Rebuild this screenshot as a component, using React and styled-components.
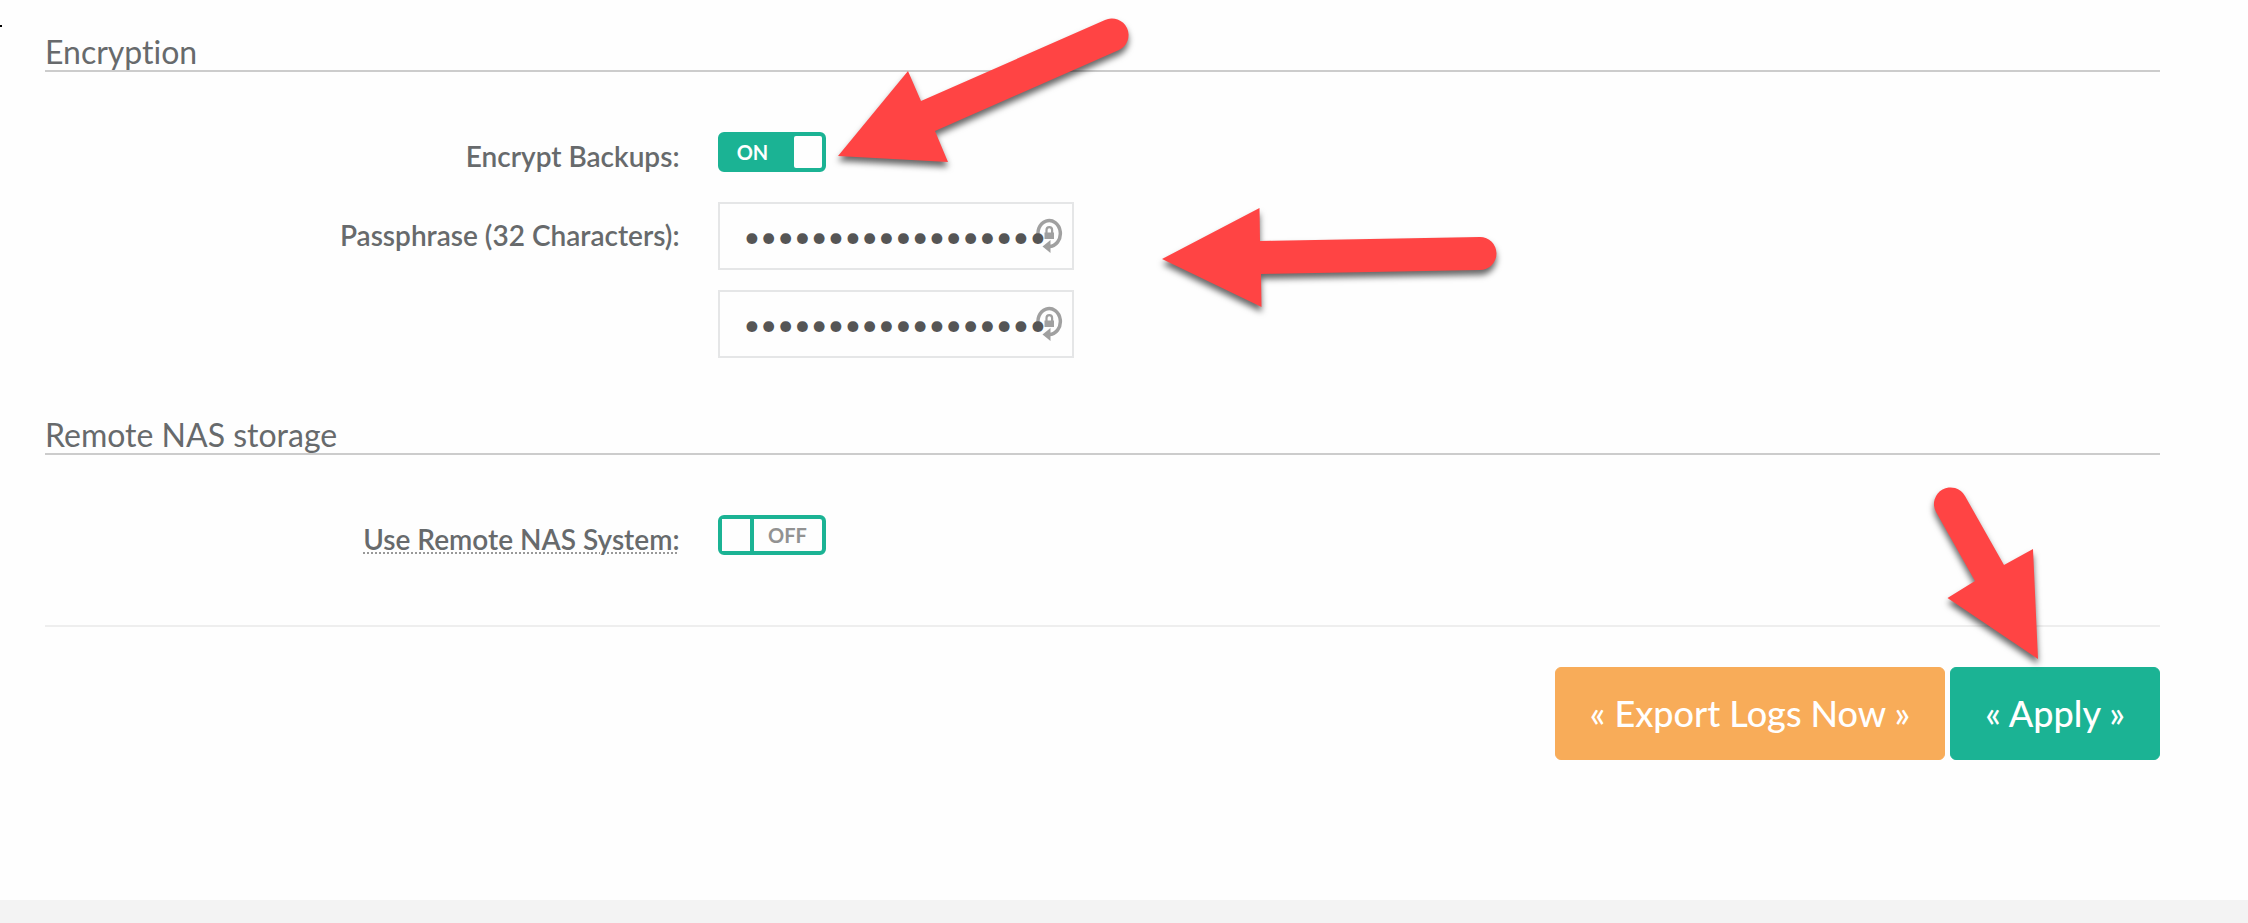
import { useState } from "react";
import styled, { createGlobalStyle } from "styled-components";

const colors = {
  green: "#1bb394",
  orange: "#f8ac59",
  text: "#676a6c",
  red: "#ff4444",
  icon: "#a0a0a0",
};

const App = () => {
  const [encrypt, setEncrypt] = useState(true);
  const [remoteNas, setRemoteNas] = useState(false);
  const [passphrase, setPassphrase] = useState("0123456789abcdef0123456789abcdef");
  const [confirm, setConfirm] = useState("0123456789abcdef0123456789abcdef");

  return (
    <>
      <GlobalStyle />
      <StyledPage>
        <StyledSpeck />
        <StyledForm onSubmit={(e) => e.preventDefault()}>
          <StyledSection>
            <StyledHeading>Encryption</StyledHeading>
            <StyledRow>
              <StyledLabel htmlFor="encrypt">Encrypt Backups:</StyledLabel>
              <StyledAnchor>
                <Switch id="encrypt" checked={encrypt} onChange={setEncrypt} />
                <Arrow
                  left={110}
                  top={-132}
                  width={310}
                  height={180}
                  d="M10 156L80 71L93 101L277 20A16.500 16.500 0 0 1 291 50L107 131L120 162Z"
                />
              </StyledAnchor>
            </StyledRow>
            <StyledRow>
              <StyledLabel htmlFor="passphrase" $tall>
                Passphrase (32 Characters):
              </StyledLabel>
              <StyledFields>
                <PasswordField
                  id="passphrase"
                  value={passphrase}
                  onChange={setPassphrase}
                />
                <PasswordField
                  label="Confirm passphrase"
                  value={confirm}
                  onChange={setConfirm}
                />
                <Arrow
                  left={434}
                  top={-2}
                  width={350}
                  height={120}
                  d="M10 59L107.500 8L108 41L328 37A16.500 16.500 0 0 1 328 70L109 74L109.500 107Z"
                />
              </StyledFields>
            </StyledRow>
          </StyledSection>

          <StyledSection>
            <StyledHeading>Remote NAS storage</StyledHeading>
            <StyledRow>
              <StyledLabel htmlFor="nas">
                <StyledHint>Use Remote NAS System:</StyledHint>
              </StyledLabel>
              <Switch id="nas" checked={remoteNas} onChange={setRemoteNas} />
            </StyledRow>
          </StyledSection>

          <StyledActions>
            <StyledButton type="button" $color={colors.orange}>
              « Export Logs Now »
            </StyledButton>
            <StyledAnchor>
              <StyledButton type="submit" $color={colors.green}>
                « Apply »
              </StyledButton>
              <Arrow
                left={-30}
                top={-187}
                width={130}
                height={190}
                d="M118 179L113 69L84 85L45 16A16.500 16.500 0 0 0 16 32L55 101L27.500 118Z"
              />
            </StyledAnchor>
          </StyledActions>
        </StyledForm>
        <StyledFooter />
      </StyledPage>
    </>
  );
};

const Switch = ({ id, checked, onChange }) => (
  <StyledSwitch $on={checked}>
    <StyledCheckbox
      id={id}
      type="checkbox"
      role="switch"
      checked={checked}
      onChange={(e) => onChange(e.target.checked)}
    />
    <StyledSwitchText $on={checked}>{checked ? "ON" : "OFF"}</StyledSwitchText>
    <StyledKnob $on={checked} />
  </StyledSwitch>
);

const PasswordField = ({ id, label, value, onChange }) => (
  <StyledField>
    <StyledLockIcon viewBox="0 0 28 36" aria-hidden="true">
      <path
        d="M4 21A11.200 13 0 1 1 14 28.500"
        fill="none"
        stroke={colors.icon}
        strokeWidth="3.500"
      />
      <path d="M7.500 28.500L15.500 22V35Z" fill={colors.icon} />
      <path d="M9.500 14.500h9.500v6.500h-9.500z" fill={colors.icon} />
      <path
        d="M11.500 15v-3a2.800 2.800 0 0 1 5.600 0v3"
        fill="none"
        stroke={colors.icon}
        strokeWidth="2.200"
      />
    </StyledLockIcon>
    <StyledInput
      id={id}
      type="password"
      aria-label={label}
      value={value}
      onChange={(e) => onChange(e.target.value)}
    />
  </StyledField>
);

const Arrow = ({ left, top, width, height, d }) => (
  <StyledArrow
    $left={left}
    $top={top}
    width={width}
    height={height}
    viewBox={`0 0 ${width} ${height}`}
    aria-hidden="true"
  >
    <path d={d} fill={colors.red} />
  </StyledArrow>
);

const GlobalStyle = createGlobalStyle`
  * {
    box-sizing: border-box;
  }
  body {
    margin: 0;
    background: #fefefe;
    color: ${colors.text};
    font-family: Lato, "Open Sans", sans-serif;
    font-size: 28px;
    font-variant-ligatures: none;
  }
`;

const StyledPage = styled.div`
  position: relative;
  display: flex;
  flex-direction: column;
  min-height: 100vh;
`;
const StyledSpeck = styled.span`
  position: absolute;
  top: 25px;
  left: 0;
  width: 2px;
  height: 2px;
  background: #000000;
`;
const StyledForm = styled.form`
  flex: 1;
  padding: 34px 88px 0 45px;
`;
const StyledSection = styled.section`
  padding-bottom: 29px;
`;
const StyledHeading = styled.h2`
  margin: 0 0 60px;
  border-bottom: 2px solid #cccccc;
  font-size: 32px;
  font-weight: 400;
  line-height: 36px;
`;
const StyledRow = styled.div`
  display: grid;
  grid-template-columns: 30% 1fr;
  column-gap: 38px;
  align-items: start;
  margin-bottom: 30px;
`;
const StyledLabel = styled.label`
  padding-top: ${({ $tall }) => ($tall ? "17px" : "8px")};
  font-size: 28px;
  font-weight: 600;
  line-height: 32px;
  text-align: right;
`;
const StyledHint = styled.span`
  text-decoration: underline dotted #999999 2px;
  text-underline-offset: 2px;
`;
const StyledAnchor = styled.div`
  position: relative;
`;
const StyledFields = styled.div`
  position: relative;
  display: grid;
  gap: 20px;
`;
const StyledSwitch = styled.div`
  position: relative;
  display: flex;
  flex-direction: ${({ $on }) => ($on ? "row" : "row-reverse")};
  width: 108px;
  height: 40px;
  border: 4px solid ${colors.green};
  border-radius: 6px;
  background: ${({ $on }) => ($on ? colors.green : "#fefefe")};
`;
const StyledCheckbox = styled.input`
  position: absolute;
  inset: 0;
  width: 100%;
  height: 100%;
  margin: 0;
  opacity: 0;
  cursor: pointer;
`;
const StyledSwitchText = styled.span`
  flex: 1;
  padding-right: ${({ $on }) => ($on ? "10px" : "0")};
  color: ${({ $on }) => ($on ? "#ffffff" : "#929292")};
  font-size: 20px;
  font-weight: 700;
  line-height: 32px;
  text-align: center;
`;
const StyledKnob = styled.span`
  width: ${({ $on }) => ($on ? "28px" : "32px")};
  border-right: ${({ $on }) => ($on ? "none" : `4px solid ${colors.green}`)};
  border-radius: ${({ $on }) => ($on ? "2px" : "0")};
  background: #fefefe;
`;
const StyledField = styled.div`
  position: relative;
  width: 356px;
  height: 68px;
`;
const StyledInput = styled.input`
  position: relative;
  width: 100%;
  height: 100%;
  padding: 0 24px 2px;
  border: 2px solid #e5e6e7;
  border-radius: 0;
  outline: none;
  background: transparent;
  color: #555555;
  font-family: inherit;
  font-size: 29px;
`;
const StyledLockIcon = styled.svg`
  position: absolute;
  top: 16px;
  right: 11px;
  width: 28px;
  height: 36px;
`;
const StyledActions = styled.div`
  display: flex;
  justify-content: flex-end;
  gap: 5px;
  margin-top: 11px;
  padding-top: 40px;
  border-top: 2px solid #eeeeee;
`;
const StyledButton = styled.button`
  padding: 24px 34px;
  border: 1px solid ${({ $color }) => $color};
  border-radius: 6px;
  background: ${({ $color }) => $color};
  color: #ffffff;
  font-family: inherit;
  font-size: 36px;
  font-weight: 500;
  line-height: 43px;
  cursor: pointer;
`;
const StyledArrow = styled.svg`
  position: absolute;
  top: ${({ $top }) => $top}px;
  left: ${({ $left }) => $left}px;
  overflow: visible;
  pointer-events: none;
  filter: drop-shadow(0 5px 3px rgba(0, 0, 0, 0.6));
`;
const StyledFooter = styled.footer`
  height: 23px;
  background: #f3f3f3;
`;

export default App;
